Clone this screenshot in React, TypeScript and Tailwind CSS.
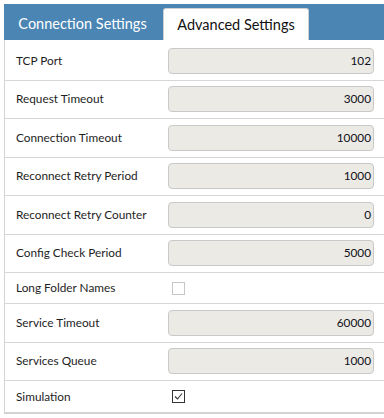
import React from "react";

type Row =
  | { label: string; kind: "number"; value: string }
  | { label: string; kind: "check"; checked: boolean };

const rows: Row[] = [
  { label: "TCP Port", kind: "number", value: "102" },
  { label: "Request Timeout", kind: "number", value: "3000" },
  { label: "Connection Timeout", kind: "number", value: "10000" },
  { label: "Reconnect Retry Period", kind: "number", value: "1000" },
  { label: "Reconnect Retry Counter", kind: "number", value: "0" },
  { label: "Config Check Period", kind: "number", value: "5000" },
  { label: "Long Folder Names", kind: "check", checked: false },
  { label: "Service Timeout", kind: "number", value: "60000" },
  { label: "Services Queue", kind: "number", value: "1000" },
  { label: "Simulation", kind: "check", checked: true },
];

function Checkbox({ checked }: { checked: boolean }) {
  if (!checked) {
    return <span className="ml-1 block h-[13px] w-[13px] border border-[#c6c6c6] bg-white" />;
  }
  return (
    <span className="ml-1 flex h-[13px] w-[13px] items-center justify-center border border-[#333] bg-white">
      <svg width="9" height="9" viewBox="0 0 9 9" fill="none">
        <path d="M1 4.5 L3.5 7 L8 1.5" stroke="#333" strokeWidth="1.1" />
      </svg>
    </span>
  );
}

export default function App() {
  return (
    <div className="h-[418px] w-[384px] overflow-hidden bg-white pl-1 pt-1 font-['Lato',sans-serif] text-[#1e1e1e]">
      {/* Tab strip */}
      <div className="flex h-9 items-end gap-[2px] bg-[#4a85b4]">
        <div className="flex h-8 w-[157px] items-center justify-center text-[14.5px] text-white">
          Connection Settings
        </div>
        <div className="flex h-8 w-[146px] items-center justify-center rounded-t-[3px] border border-b-0 border-[#cfcfcf] bg-white text-[14.5px] text-[#111]">
          Advanced Settings
        </div>
      </div>

      {/* Settings rows */}
      <div className="border-b-2 border-l border-[#d3d3d3] pt-[2px]">
        {rows.map((row) => (
          <div
            key={row.label}
            className={`flex items-center border-b border-[#d6d6d6] pl-[11px] pr-[10px] last:border-b-0 ${
              row.kind === "number" ? "h-[38.5px]" : "h-[31px]"
            }`}
          >
            <span className="w-[152px] shrink-0 text-[11.8px]">{row.label}</span>
            {row.kind === "number" ? (
              <div className="flex h-[26px] flex-1 items-center justify-end rounded-[4px] border border-[#c9c9c9] bg-[#ebeae4] pr-[2px] text-[11.8px] text-[#101020]">
                {row.value}
              </div>
            ) : (
              <Checkbox checked={row.checked} />
            )}
          </div>
        ))}
      </div>
    </div>
  );
}
